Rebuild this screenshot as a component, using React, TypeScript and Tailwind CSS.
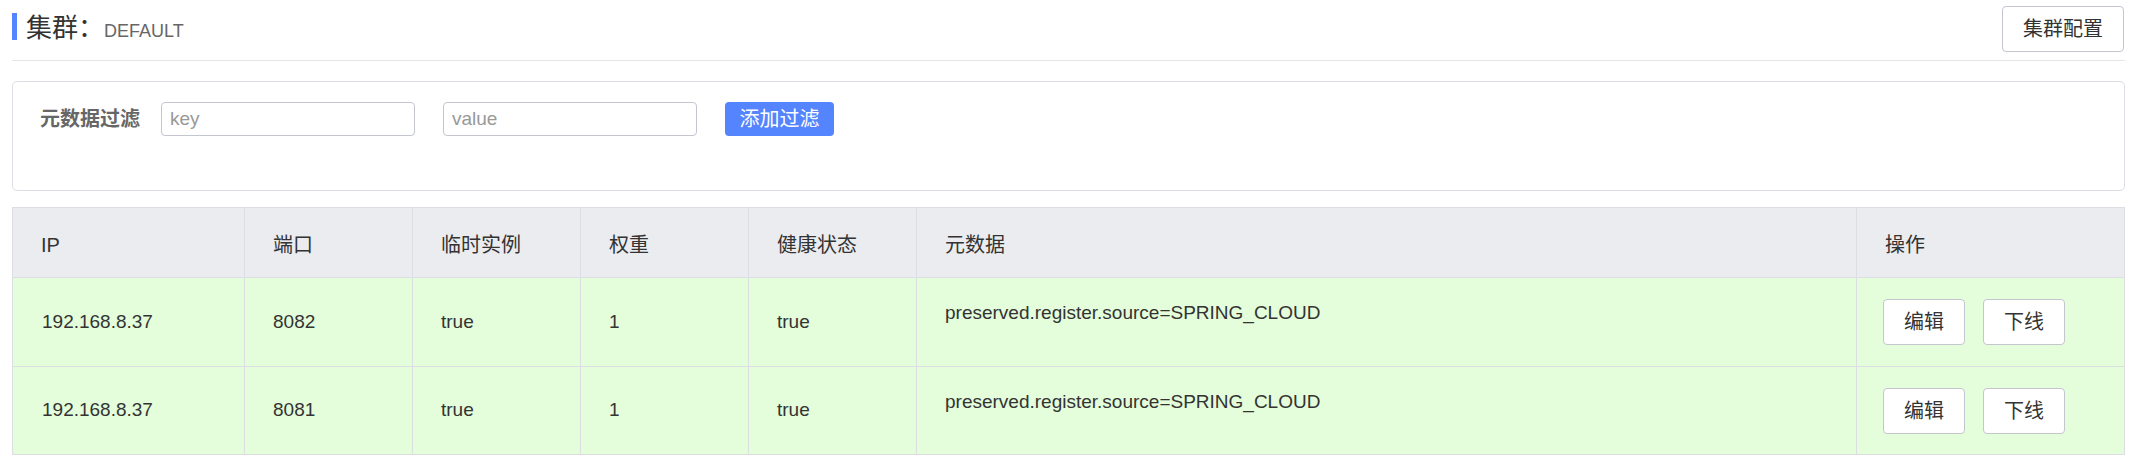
import React from "react";

type Instance = {
  ip: string;
  port: number;
  ephemeral: boolean;
  weight: number;
  healthy: boolean;
  metadata: string;
  height: string;
};

const instances: Instance[] = [
  { ip: "192.168.8.37", port: 8082, ephemeral: true, weight: 1, healthy: true, metadata: "preserved.register.source=SPRING_CLOUD", height: "h-[89px]" },
  { ip: "192.168.8.37", port: 8081, ephemeral: true, weight: 1, healthy: true, metadata: "preserved.register.source=SPRING_CLOUD", height: "h-[88px]" },
];

const columns = ["IP", "端口", "临时实例", "权重", "健康状态", "元数据", "操作"];

function FilterCard() {
  return (
    <div className="mt-[20px] h-[110px] rounded-[5px] border border-[#dcdee3] pl-[27px] pt-[20px]">
      <div className="flex items-center">
        <label className="text-[20px] font-bold text-[#666]">元数据过滤</label>
        <input
          placeholder="key"
          className="ml-[21px] h-[34px] w-[254px] rounded-[4px] border border-[#c4c6cf] px-[8px] text-[19px] text-[#333] outline-none placeholder:text-[#999]"
        />
        <input
          placeholder="value"
          className="ml-[28px] h-[34px] w-[254px] rounded-[4px] border border-[#c4c6cf] px-[8px] text-[19px] text-[#333] outline-none placeholder:text-[#999]"
        />
        <button className="ml-[28px] h-[34px] w-[109px] rounded-[4px] bg-[#5584ff] text-[20px] text-white">
          添加过滤
        </button>
      </div>
    </div>
  );
}

function InstanceTable() {
  return (
    <table className="mt-[16px] w-full table-fixed border-collapse border border-[#dcdee3] text-[19px] text-[#333]">
      <colgroup>
        <col className="w-[232px]" />
        <col className="w-[168px]" />
        <col className="w-[168px]" />
        <col className="w-[168px]" />
        <col className="w-[168px]" />
        <col className="w-[940px]" />
        <col />
      </colgroup>
      <thead>
        <tr className="h-[70px] bg-[#ebecf0]">
          {columns.map((c) => (
            <th key={c} className="border border-[#dcdee3] pl-[28px] pt-[5px] text-left text-[20px] font-normal">
              {c}
            </th>
          ))}
        </tr>
      </thead>
      <tbody>
        {instances.map((row) => (
          <tr key={row.port} className={`${row.height} bg-[#e4fdda]`}>
            <td className="border border-[#dcdee3] pl-[29px]">{row.ip}</td>
            <td className="border border-[#dcdee3] pl-[28px]">{row.port}</td>
            <td className="border border-[#dcdee3] pl-[28px]">{String(row.ephemeral)}</td>
            <td className="border border-[#dcdee3] pl-[28px]">{row.weight}</td>
            <td className="border border-[#dcdee3] pl-[28px]">{String(row.healthy)}</td>
            <td className="border border-[#dcdee3] pl-[28px] pt-[23px] align-top leading-[24px]">{row.metadata}</td>
            <td className="border border-[#dcdee3] pl-[26px]">
              <div className="flex gap-[18px] text-[20px]">
                <button className="h-[46px] w-[82px] rounded-[4px] border border-[#c4c6cf] bg-white">编辑</button>
                <button className="h-[46px] w-[82px] rounded-[4px] border border-[#c4c6cf] bg-white">下线</button>
              </div>
            </td>
          </tr>
        ))}
      </tbody>
    </table>
  );
}

export default function App() {
  return (
    <div className="min-h-screen bg-white pl-[12px] pr-[15px] font-['Liberation_Sans','Noto_Sans_CJK_SC',sans-serif] text-[#333]">
      <div className="flex h-[61px] items-start justify-between border-b border-[#e6e6e6]">
        <div className="mt-[13px] flex h-[27px]">
          <span className="h-[27px] w-[5px] bg-[#5584ff]" />
          <div className="ml-[9px] flex items-baseline pt-[2px]">
            <h1 className="text-[26px] leading-[27px] text-[#333]">集群：</h1>
            <span className="text-[18px] text-[#666]">DEFAULT</span>
          </div>
        </div>
        <button className="mt-[6px] mr-[1px] h-[46px] w-[122px] rounded-[4px] border border-[#c4c6cf] bg-white text-[20px] text-[#333]">
          集群配置
        </button>
      </div>
      <FilterCard />
      <InstanceTable />
    </div>
  );
}
